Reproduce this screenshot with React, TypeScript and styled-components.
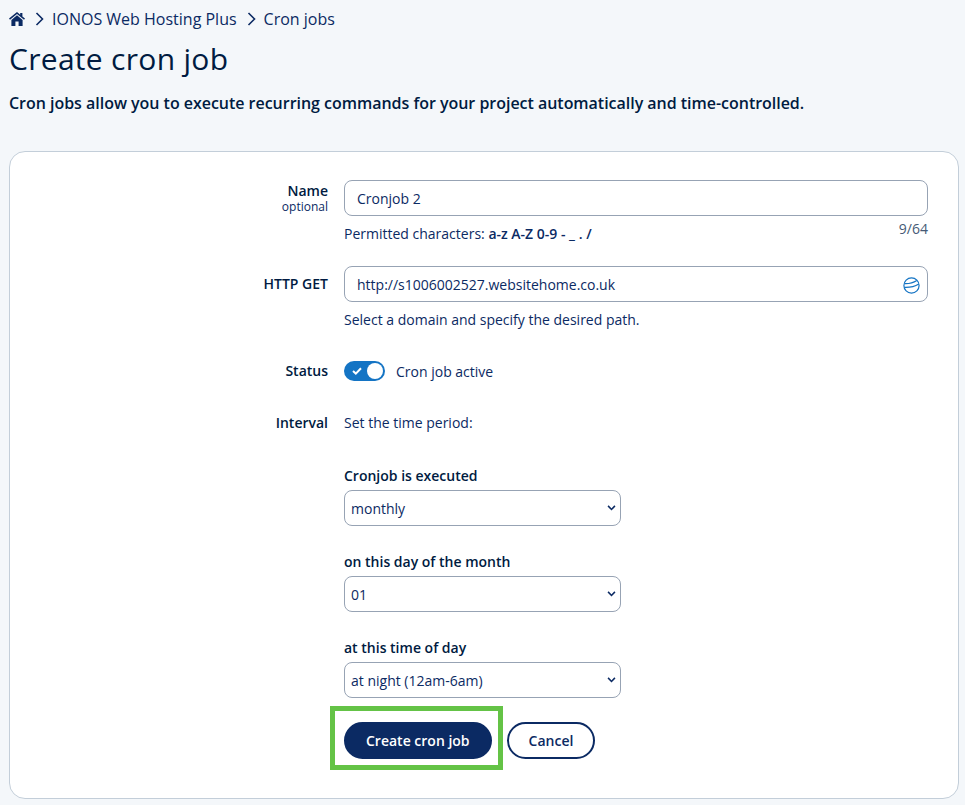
import styled, { createGlobalStyle } from 'styled-components';

const GlobalStyle = createGlobalStyle`
  html, body {
    margin: 0;
    padding: 0;
    background: #f4f7fa;
  }

  body {
    font-family: 'Open Sans', 'Liberation Sans', sans-serif;
    font-size: 14px;
    color: #0b2a63;
  }
`;

const Page = styled.div`
  width: 965px;
  height: 805px;
  overflow: hidden;
  box-sizing: border-box;
  padding: 9px 6px 0 9px;
`;

const Breadcrumb = styled.nav`
  display: flex;
  align-items: center;
  height: 20px;
  font-size: 16px;
  color: #0b2a63;
`;

const Crumb = styled.a`
  color: inherit;
  text-decoration: none;
`;

const Separator = styled.svg`
  width: 9px;
  height: 14px;
  margin: 0 8px 0 10px;
  fill: none;
  stroke: #0b2a63;
  stroke-width: 1.6;
`;

const Title = styled.h1`
  margin: 9px 0 0;
  font-size: 30px;
  line-height: 42px;
  font-weight: 400;
  color: #001b41;
  letter-spacing: 0.3px;
`;

const Intro = styled.p`
  margin: 12px 0 0;
  font-size: 16px;
  line-height: 22px;
  font-weight: 600;
  color: #001b41;
  letter-spacing: -0.025px;
`;

const Card = styled.section`
  box-sizing: border-box;
  width: 950px;
  height: 648px;
  margin-top: 37px;
  padding: 28px 30px 0 0;
  background: #fff;
  border: 1px solid #c3ced9;
  border-radius: 16px;
`;

const Row = styled.div<{ $bottom: number }>`
  display: grid;
  grid-template-columns: 318px 584px;
  column-gap: 16px;
  margin-bottom: ${(p) => p.$bottom}px;
`;

const Label = styled.div<{ $top?: number }>`
  padding-top: ${(p) => p.$top ?? 0}px;
  text-align: right;
  font-weight: 600;
  line-height: 20px;
  color: #001b41;
`;

const Optional = styled.div`
  font-size: 12px;
  line-height: 12px;
  font-weight: 400;
  color: #0b2a63;
`;

const InputWrap = styled.div`
  position: relative;
`;

const TextInput = styled.input`
  display: block;
  box-sizing: border-box;
  width: 100%;
  height: 36px;
  padding: 0 12px;
  font: inherit;
  color: #0b2a63;
  background: #fff;
  border: 1px solid #97a3b4;
  border-radius: 8px;
  outline: none;
`;

const GlobeIcon = styled.svg`
  position: absolute;
  top: 11px;
  right: 8px;
  width: 17px;
  height: 17px;
  fill: none;
  stroke: #1474c4;
  stroke-width: 1.2;
`;

const HintRow = styled.div`
  display: flex;
  justify-content: space-between;
  margin-top: 8px;
  line-height: 19px;
  color: #0b2a63;
`;

const Counter = styled.span`
  margin-top: -5px;
  font-size: 14px;
  color: #465a75;
`;

const Strong = styled.strong`
  font-weight: 600;
`;

const ToggleLine = styled.div`
  display: flex;
  align-items: center;
  height: 20px;
  gap: 11px;
`;

const Toggle = styled.span`
  position: relative;
  display: block;
  box-sizing: border-box;
  width: 41px;
  height: 20px;
  background: #1474c4;
  border-radius: 10px;
`;

const ToggleKnob = styled.span`
  position: absolute;
  top: 2px;
  right: 2px;
  width: 16px;
  height: 16px;
  background: #fff;
  border-radius: 50%;
`;

const ToggleCheck = styled.svg`
  position: absolute;
  top: 6px;
  left: 8px;
  width: 10px;
  height: 8px;
  fill: none;
  stroke: #fff;
  stroke-width: 2;
`;

const PlainText = styled.div`
  line-height: 20px;
  color: #0b2a63;
`;

const FieldGroup = styled.div<{ $top: number }>`
  margin-top: ${(p) => p.$top}px;
`;

const FieldLabel = styled.label`
  display: block;
  margin-bottom: 5px;
  font-weight: 600;
  line-height: 19px;
  color: #001b41;
`;

const SelectWrap = styled.div`
  position: relative;
  width: 277px;
`;

const Select = styled.select`
  display: block;
  box-sizing: border-box;
  width: 100%;
  height: 36px;
  padding: 0 24px 0 6px;
  font: inherit;
  color: #0b2a63;
  background: #fff;
  border: 1px solid #97a3b4;
  border-radius: 8px;
  outline: none;
  appearance: none;
`;

const Chevron = styled.svg`
  position: absolute;
  top: 15px;
  right: 5px;
  width: 9px;
  height: 6px;
  fill: none;
  stroke: #0b2a63;
  stroke-width: 1.8;
  pointer-events: none;
`;

const Actions = styled.div`
  display: flex;
  align-items: center;
  gap: 15px;
  margin-top: 24px;
`;

const Highlight = styled.span`
  position: relative;
  display: block;

  &::after {
    content: '';
    position: absolute;
    top: -16px;
    right: -11px;
    bottom: -11px;
    left: -14px;
    border: 5px solid #64c346;
    pointer-events: none;
  }
`;

const Button = styled.button<{ $primary?: boolean }>`
  display: block;
  box-sizing: border-box;
  height: 37px;
  padding: 0 20px;
  font: inherit;
  font-weight: 600;
  color: ${(p) => (p.$primary ? '#fff' : '#0b2a63')};
  background: ${(p) => (p.$primary ? '#0b2a63' : '#fff')};
  border: 2px solid #0b2a63;
  border-radius: 19px;
`;

const HomeIcon = () => (
  <svg width="16" height="14" viewBox="0 0 16 14" fill="#0b2a63" aria-hidden="true">
    <path d="M8 0 L0 6.6 L1 7.8 L8 2.1 L15 7.8 L16 6.6 L13.4 4.5 V1 H11.2 V2.7 Z" />
    <path d="M8 3.3 L2.4 7.9 V14 H6.4 V9.6 H9.6 V14 H13.6 V7.9 Z" />
  </svg>
);

const CrumbSeparator = () => (
  <Separator viewBox="0 0 9 14" aria-hidden="true">
    <path d="M1.5 1 L7.5 7 L1.5 13" />
  </Separator>
);

const SelectField = ({ label, value, top }: { label: string; value: string; top: number }) => (
  <FieldGroup $top={top}>
    <FieldLabel>{label}</FieldLabel>
    <SelectWrap>
      <Select defaultValue={value}>
        <option>{value}</option>
      </Select>
      <Chevron viewBox="0 0 10 7" aria-hidden="true">
        <path d="M1 1 L5 5.2 L9 1" />
      </Chevron>
    </SelectWrap>
  </FieldGroup>
);

const App = () => {
  return (
    <Page>
      <GlobalStyle />
      <Breadcrumb>
        <HomeIcon />
        <CrumbSeparator />
        <Crumb href="#">IONOS Web Hosting Plus</Crumb>
        <CrumbSeparator />
        <Crumb href="#">Cron jobs</Crumb>
      </Breadcrumb>
      <Title>Create cron job</Title>
      <Intro>Cron jobs allow you to execute recurring commands for your project automatically and time-controlled.</Intro>

      <Card>
        <Row $bottom={23}>
          <Label $top={1}>
            Name
            <Optional>optional</Optional>
          </Label>
          <div>
            <InputWrap>
              <TextInput defaultValue="Cronjob 2" />
            </InputWrap>
            <HintRow>
              <span>
                Permitted characters: <Strong>a-z A-Z 0-9 - _ . /</Strong>
              </span>
              <Counter>9/64</Counter>
            </HintRow>
          </div>
        </Row>

        <Row $bottom={32}>
          <Label $top={8}>HTTP GET</Label>
          <div>
            <InputWrap>
              <TextInput defaultValue="http://s1006002527.websitehome.co.uk" />
              <GlobeIcon viewBox="0 0 17 17" aria-hidden="true">
                <circle cx="8.5" cy="8.5" r="7.6" />
                <path d="M1.4 6.6 C5.5 6.8 10.5 5.6 13.8 3.4" />
                <path d="M1.5 10.4 C6.5 10.6 12 9.4 15.8 7" />
              </GlobeIcon>
            </InputWrap>
            <HintRow>Select a domain and specify the desired path.</HintRow>
          </div>
        </Row>

        <Row $bottom={32}>
          <Label>Status</Label>
          <ToggleLine>
            <Toggle>
              <ToggleCheck viewBox="0 0 10 8" aria-hidden="true">
                <path d="M1 4 L3.8 6.6 L9 1.2" />
              </ToggleCheck>
              <ToggleKnob />
            </Toggle>
            Cron job active
          </ToggleLine>
        </Row>

        <Row $bottom={0}>
          <Label>Interval</Label>
          <div>
            <PlainText>Set the time period:</PlainText>
            <SelectField label="Cronjob is executed" value="monthly" top={33} />
            <SelectField label="on this day of the month" value="01" top={26} />
            <SelectField label="at this time of day" value="at night (12am-6am)" top={26} />
            <Actions>
              <Highlight>
                <Button $primary>Create cron job</Button>
              </Highlight>
              <Button>Cancel</Button>
            </Actions>
          </div>
        </Row>
      </Card>
    </Page>
  );
};

export default App;
